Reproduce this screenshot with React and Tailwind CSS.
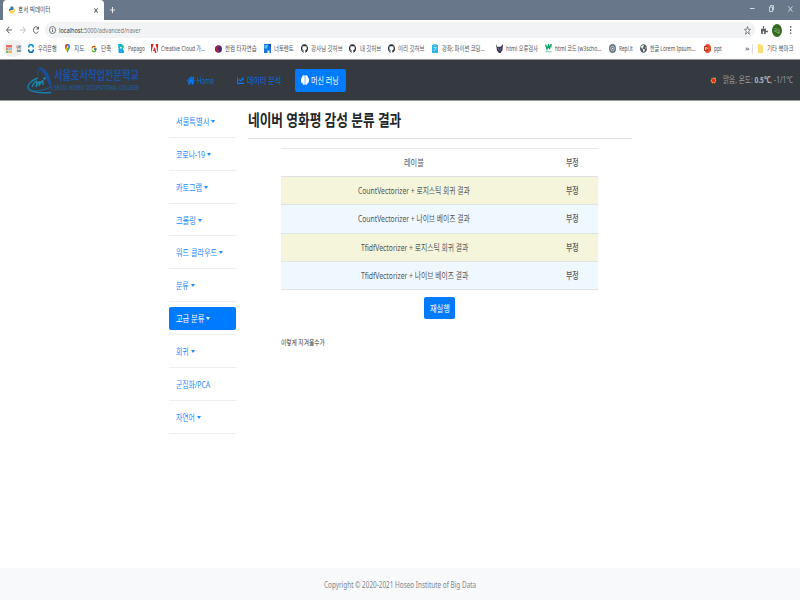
import React, { useLayoutEffect, useRef, useState } from "react";
import { FaHome, FaChartLine, FaGithub, FaPuzzlePiece, FaGlobeAmericas } from "react-icons/fa";
import { FcGoogle } from "react-icons/fc";

// Single line of text condensed or expanded to a given width.
function T({ w, className = "", children }) {
  const ref = useRef(null);
  const [k, setK] = useState(1);
  useLayoutEffect(() => {
    const fit = () => {
      if (ref.current && ref.current.offsetWidth) setK(w / ref.current.offsetWidth);
    };
    fit();
    document.fonts?.ready.then(fit);
  }, [w]);
  return (
    <span className={"block shrink-0 whitespace-nowrap " + className} style={{ width: w }}>
      <span ref={ref} className="inline-block origin-left" style={{ transform: `scaleX(${k})` }}>
        {children}
      </span>
    </span>
  );
}

function Svg({ className = "w-[7px] h-[9px]", box = "0 0 14 18", children }) {
  return (
    <svg viewBox={box} preserveAspectRatio="none" className={"block shrink-0 " + className} fill="none">
      {children}
    </svg>
  );
}

const Github = () => <FaGithub preserveAspectRatio="none" className="block w-[7px] h-[9px] shrink-0 text-[#24292e]" />;

const icons = {
  apps: (
    <Svg className="w-[6px] h-[8px]" box="0 0 6 8">
      <path d="M0 0h6v2.500H0z" fill="#ee6b5f" />
      <path d="M0 3h2v2H0z" fill="#ee8f58" /><path d="M2.300 3h3.700v2H2.300z" fill="#9cbfec" />
      <path d="M0 5.500h2.500v2.500H0z" fill="#7bbd72" /><path d="M2.500 5.500h3.500v2.500H2.500z" fill="#f3b54a" />
    </Svg>
  ),
  woori: (
    <Svg className="w-[6px] h-[9px]" box="0 0 12 18">
      <path d="M1 7C2-.5 10-.5 11 7" stroke="#1198d6" strokeWidth="3.500" />
      <path d="M1 11c1 7.500 9 7.500 10 0" stroke="#0873b9" strokeWidth="3.500" />
    </Svg>
  ),
  map: (
    <Svg className="w-[5px] h-[9px]" box="0 0 10 18">
      <path d="M5 18C4 13 0 10 0 6a5 6 0 0 1 10 0c0 4-4 7-5 12z" fill="#34a853" />
      <path d="M0 6a5 6 0 0 1 5-6v6L1 10z" fill="#ea4335" />
      <path d="M5 0a5 6 0 0 1 5 6L5 5z" fill="#4285f4" />
      <path d="M1 10l4-4v6l-2 2z" fill="#fbbc04" /><circle cx="5" cy="6" r="1.700" fill="#fff" />
    </Svg>
  ),
  google: <FcGoogle preserveAspectRatio="none" className="block w-[6px] h-[8px] shrink-0" />,
  papago: (
    <Svg className="w-[6px] h-[9px]" box="0 0 12 18">
      <path d="M0 0h7l3 3v9l2 1v5H1V9z" fill="#19a9e8" /><path d="M6 1c4 0 6 2 6 5l-5 5z" fill="#17c98b" />
      <path d="M4 6h3v3H4z" fill="#fff" /><path d="M0 0h4v5H0z" fill="#25c3cf" />
    </Svg>
  ),
  adobe: (
    <Svg className="w-[7px] h-[9px]">
      <path d="M0 0h5L0 18zM9 0h5v18zM7 6l4 12H8l-1-4H4z" fill="#ee1c16" />
    </Svg>
  ),
  hancom: (
    <Svg className="w-[7px] h-[8px]" box="0 0 14 16">
      <ellipse cx="7" cy="8" rx="7" ry="7.500" fill="#5a2a78" />
      <path d="M1 5C4 0 10 0 11 5s-4 10-7 9S-1 9 1 5z" fill="#c01c3a" opacity=".8" />
      <path d="M7 3c5 0 6 5 4 9-3 2-6-3-4-9z" fill="#3a2a80" />
    </Svg>
  ),
  torrent: (
    <Svg className="w-[7px] h-[9px]">
      <path d="M0 0h14v18H0z" fill="#1976e0" /><path d="M1 2h7l-2 7H1z" fill="#58c6fa" />
      <path d="M9 0h5v9z" fill="#124fb4" /><path d="M7 13h4v5H7z" fill="#e2eefb" />
    </Svg>
  ),
  github: <Github />,
  course: (
    <Svg className="w-[6px] h-[9px]" box="0 0 12 18">
      <path d="M0 2h12v16H0z" fill="#2fb5ea" /><path d="M2 0h8v3H2z" fill="#70cdf1" />
      <path d="M3 7h6M9 7L4 14" stroke="#c8edfb" strokeWidth="1.500" />
    </Svg>
  ),
  validator: (
    <Svg className="w-[7px] h-[9px]">
      <path d="M0 0l3 6h1l2-1 1 1 3-1 4-5-1 12-4 6H6l-4-5z" fill="#332f4c" /><path d="M4 7l2 6M10 7l-2 6" stroke="#a79bbb" strokeWidth="1.300" />
    </Svg>
  ),
  w3: (
    <Svg className="w-[7px] h-[9px]">
      <path d="M1 1l3 9 3-8 2 8 2-8" stroke="#08a566" strokeWidth="2.600" /><path d="M10 1h4l-2 3 1 3" stroke="#08a566" strokeWidth="1.400" />
      <path d="M1 15.500h12" stroke="#73c9a4" strokeWidth="2" />
    </Svg>
  ),
  replit: (
    <Svg className="w-[7px] h-[9px]">
      <ellipse cx="7" cy="9" rx="7" ry="9" fill="#667881" /><ellipse cx="7" cy="9" rx="3.600" ry="4.800" stroke="#dfe5e8" strokeWidth="1.300" />
      <circle cx="7" cy="9" r="1.500" fill="#dfe5e8" />
    </Svg>
  ),
  globe: <FaGlobeAmericas preserveAspectRatio="none" className="block w-[7px] h-[9px] shrink-0 text-[#50565d]" />,
  ppt: (
    <Svg className="w-[7px] h-[9px]">
      <ellipse cx="7.500" cy="9" rx="6.500" ry="9" fill="#e0512c" /><path d="M0 4h8v10H0z" fill="#c5371b" />
      <path d="M3 12V7h2q2 0 2 1.500T5 10H3" stroke="#fff" strokeWidth="1.300" />
    </Svg>
  ),
};

// [icon, label, slot width, gap before label, label width]
const bookmarks = [
  ["woori", "우리은행", 37, 4, 19],
  ["map", "지도", 26, 4, 10],
  ["google", "단축", 27, 4, 10],
  ["papago", "Papago", 33, 4, 17],
  ["adobe", "Creative Cloud 가...", 64, 3, 44],
  ["hancom", "한컴 타자연습", 49, 3, 32],
  ["torrent", "너토렌트", 37, 3, 20],
  ["github", "강사님 깃허브", 48, 3, 32],
  ["github", "내 깃허브", 39, 4, 21],
  ["github", "이리 깃허브", 44, 3, 27],
  ["course", "강좌: 파이썬 코딩...", 64, 4, 43],
  ["validator", "html 오류검사", 49, 3, 32],
  ["w3", "html 코드 (w3scho...", 64, 3, 46],
  ["replit", "Repl.it", 31, 3, 14],
  ["globe", "한글 Lorem Ipsum...", 64, 3, 45],
  ["ppt", "ppt", 41, 3, 8],
];

const sidebar = [
  ["서울특별시", 33], ["코로나-19", 29], ["카토그램", 26], ["크롤링", 20], ["워드 클라우드", 41],
  ["분류", 13], ["고급 분류", 28], ["회귀", 13], ["군집화/PCA", 34], ["자연어", 19],
];

const rows = [
  ["CountVectorizer + 로지스틱 회귀 결과", 112],
  ["CountVectorizer + 나이브 베이즈 결과", 112],
  ["TfidfVectorizer + 로지스틱 회귀 결과", 107],
  ["TfidfVectorizer + 나이브 베이즈 결과", 107],
];

function Browser() {
  return (
    <header>
      <div className="flex h-5 bg-[#68778a]">
        <div className="ml-[3px] flex h-5 w-[101px] items-center rounded-t-[4px] bg-white pl-[6px]">
          <Svg className="w-[6px] h-[8px]" box="0 0 12 16">
            <path d="M3 1h4l2 2v5H4L2 11 0 9V6l3-1z" fill="#3776ab" />
            <path d="M9 15H4l-2-2V9h6l2-4 2 2v4l-3 1z" fill="#ffd343" />
          </Svg>
          <T w={32} className="ml-[3px] pb-px text-[7px] leading-[9px] text-[#444]">호서 빅데이터</T>
          <Svg className="ml-[44px] w-[4px] h-[5px]" box="0 0 4 5"><path d="M.3.3l3.400 4.400M3.700.3L.3 4.700" stroke="#333" strokeWidth=".9" /></Svg>
        </div>
        <Svg className="ml-[5px] mt-[6px] w-[7px] h-[8px]" box="0 0 7 8"><path d="M3.500 1v6M1 4h5" stroke="#e6e9ed" strokeWidth="1" /></Svg>
        <div className="ml-auto flex items-center pb-[3px] pr-[7px]">
          <Svg className="w-[5px] h-[5px]" box="0 0 5 5"><path d="M0 2.500h4.500" stroke="#e4e8ec" strokeWidth=".9" /></Svg>
          <Svg className="ml-[14px] w-[5px] h-[7px]" box="0 0 5 7"><path d="M.5 2h3v4.500h-3zM1.500 2V.6h3V5h-1" stroke="#e4e8ec" strokeWidth=".8" /></Svg>
          <Svg className="ml-[14px] w-[5px] h-[6px]" box="0 0 5 6"><path d="M.3.3l4.200 5.400M4.500.3L.3 5.700" stroke="#e4e8ec" strokeWidth=".8" /></Svg>
        </div>
      </div>
      <div className="flex h-[20px] items-center bg-white pl-[6px]">
        <Svg className="w-[6px] h-[8px]" box="0 0 6 8"><path d="M6 4H.7M3.200.7L.6 4l2.600 3.300" stroke="#4e5256" strokeWidth=".9" /></Svg>
        <Svg className="ml-[8px] w-[6px] h-[8px]" box="0 0 6 8"><path d="M0 4h5.300M2.800.7L5.400 4 2.800 7.300" stroke="#b5b7ba" strokeWidth=".9" /></Svg>
        <Svg className="ml-[7px] w-[6px] h-[8px]" box="0 0 6 8"><path d="M5.200 5.500A2.500 3.300 0 1 1 4.700 1.700L5.400 3H3.300M5.500.7V3.200" stroke="#4e5256" strokeWidth=".9" /></Svg>
        <div className="ml-[6px] flex h-[16px] w-[710px] items-center rounded-full bg-[#f1f3f4] pl-[4px]">
          <Svg className="w-[7px] h-[8px]" box="0 0 6 8"><ellipse cx="3" cy="4" rx="2.600" ry="3.500" stroke="#555" strokeWidth=".7" /><path d="M3 3.500V6M3 2v.8" stroke="#555" strokeWidth=".8" /></Svg>
          <T w={82} className="ml-[3px] text-[7.800px] leading-[10px] text-[#777b80]"><span className="text-[#303336]">localhost</span>:5000/advanced/naver</T>
          <Svg className="ml-auto mr-[4px] w-[7px] h-[9px]"><path d="M7 1l1.700 5.500H13L9.500 10.500l1.300 6L7 13l-3.800 3.500 1.300-6L1 6.500h4.300z" stroke="#606468" strokeWidth="1.500" /></Svg>
        </div>
        <FaPuzzlePiece preserveAspectRatio="none" className="ml-[6px] block h-[8px] w-[7px] text-[#5f6368]" />
        <div className="ml-[4px] flex h-[13px] w-[10px] items-center justify-center rounded-[50%] bg-[#33691e]"><T w={6} className="text-[5px] leading-[7px] text-[#c5d5bd]">하늘</T></div>
        <Svg className="ml-[7px] w-[3px] h-[8px]" box="0 0 3 8"><path d="M1 0h1.300v1.700H1zM1 3.200h1.300v1.700H1zM1 6.400h1.300V8H1z" fill="#606468" /></Svg>
      </div>
      <div className="flex h-[19px] items-center bg-white pb-[2px] pl-[3px] text-[6.700px] leading-[9px] text-[#4d5156]">
        <div className="mr-[5px] flex h-[17px] w-[20px] items-center rounded-full bg-[#f1f1f1] pl-[3px]">
          {icons.apps}<T w={5} className="ml-[4px]">앱</T>
        </div>
        {bookmarks.map(([icon, label, slot, gap, w], i) => (
          <div key={i} className="flex shrink-0 items-center" style={{ width: slot, columnGap: gap }}>
            {icons[icon]}<T w={w}>{label}</T>
          </div>
        ))}
        <T w={4}>»</T>
        <div className="ml-[3px] h-[10px] w-px bg-[#ddd]" />
        <Svg className="ml-[5px] w-[5px] h-[9px]" box="0 0 5 9"><path d="M0 0h2.500l.5 1h2v8H0z" fill="#fbdc75" /></Svg>
        <T w={27} className="ml-[4px]">기타 북마크</T>
      </div>
    </header>
  );
}

function Navbar() {
  return (
    <nav className="flex h-[42px] items-center border-b border-t border-b-[#92959b] border-t-[#8e8f90] bg-[#343a40] pl-[27px] text-[9.300px] leading-[12px] text-[#0a6ade]">
      <Svg className="w-[26px] h-[27px]" box="0 0 26 27">
        <path d="M10.500 8C10 4 12 1 14 1" stroke="#194f98" strokeWidth="1.200" />
        <path d="M12 1C19-1 25 11 25.500 26 22 17 19 8 12 1z" fill="#194f98" />
        <path d="M11 11C3 14-1 19 2 22.500c4 3 14 3.500 22 3" stroke="#1a7fb0" strokeWidth="1.400" />
        <path d="M2 22.500c5 3 14 1 21-2" stroke="#1a6aa8" strokeWidth=".9" />
        <path d="M5 20c2-5 5-7 5-5l-1 5c2-5 4-6 4-5l-1 4c2-5 4-6 4-5v4" stroke="#188bb5" strokeWidth="1.300" />
        <circle cx="17.500" cy="11.500" r="1.200" fill="#188bb5" />
      </Svg>
      <div className="ml-[1px] w-[85px]">
        <T w={85} className="text-[12.500px] font-bold leading-[16px] text-[#1b52a0]">서울호서직업전문학교</T>
        <T w={85} className="font-['Liberation_Sans'] text-[7px] font-bold leading-[8px] text-[#24558e]">SEOUL HOSEO OCCUPATIONAL COLLEGE</T>
      </div>
      <FaHome preserveAspectRatio="none" className="ml-[48px] block h-[9px] w-[8px] text-[#007bff]" />
      <T w={17} className="ml-[2px] pt-px">Home</T>
      <FaChartLine preserveAspectRatio="none" className="ml-[23px] block h-[9px] w-[7px] text-[#007bff]" />
      <T w={34} className="ml-[3px] pt-px">데이터 분석</T>
      <div className="ml-[14px] flex h-[23px] w-[51px] items-center rounded-[2px] bg-[#007bff] pl-[6px] text-white">
        <Svg className="h-[10px] w-[8px]" box="0 0 16 20">
          <path d="M7.500 1C4-1 2 3 2 5-1 7 0 10 0 12c0 3 2 4 3 5 1 3 3 3 4.500 2zM8.500 1C12-1 14 3 14 5c3 2 2 5 2 7 0 3-2 4-3 5-1 3-3 3-4.500 2z" fill="#fff" />
        </Svg>
        <T w={28} className="ml-[2px] pt-[2px]">머신 러닝</T>
      </div>
      <Svg className="ml-auto w-[7px] h-[9px]">
        <path d="M7 2l2 2 3-1-1 4 2 2-2 3-1 3-3-1-3 1-1-3-2-3 2-2V4l3 1z" fill="#e9a13c" /><ellipse cx="7" cy="9" rx="3.200" ry="4" fill="#f32619" />
      </Svg>
      <T w={70} className="ml-[6px] mr-[7px] text-[#9a9da0]">맑음, 온도: <b className="text-[#b2b4b6]">0.5℃</b>, -1/1℃</T>
    </nav>
  );
}

export default function App() {
  return (
    <div className="flex h-[600px] w-[800px] flex-col overflow-hidden bg-white font-['Noto_Sans','Noto_Sans_CJK_KR',sans-serif] text-[9px] leading-[12px] text-[#212529]">
      <Browser />
      <Navbar />
      <main className="flex min-h-0 flex-1 pl-[169px]">
        <aside className="w-[67px] pt-[4px]">
          {sidebar.map(([label, w]) => (
            <div key={label} className="flex h-[32.870px] items-center border-b border-[#eeeff0]">
              <div className={"flex h-[23px] w-full items-center rounded-[2px] pl-[6.500px] " + (label === "고급 분류" ? "bg-[#007bff] text-white" : "text-[#2389ff]")}>
                <T w={w} className="pt-[2px]">{label}</T>
                {label !== "군집화/PCA" && <Svg className="ml-[2px] mt-px w-[4px] h-[3px]" box="0 0 4 3"><path d="M0 0h4L2 3z" fill="currentColor" /></Svg>}
              </div>
            </div>
          ))}
        </aside>
        <section className="ml-[12px] w-[384px]">
          <h3 className="flex h-[38px] items-center border-b border-[#dfdfdf] text-[16px] font-semibold leading-[20px]">
            <T w={153} className="pt-px">네이버 영화평 감성 분류 결과</T>
          </h3>
          <div className="ml-[33px] mt-[9px] w-[317px]">
            <div className="flex h-[29px] items-center border-b border-t border-b-[#dee2e6] border-t-[#e6e8ea] text-[#50555a]">
              <div className="flex w-[266px] justify-center"><T w={20}>레이블</T></div>
              <div className="flex flex-1 justify-center"><T w={13} className="font-medium">부정</T></div>
            </div>
            {rows.map(([label, w], i) => (
              <div key={label} className={"flex h-[28.300px] items-center border-b border-[#dfe4e8] pt-px text-[#50555a] " + (i % 2 ? "bg-[#f0f8ff]" : "bg-[#f5f5dc]")}>
                <div className="flex w-[266px] justify-center"><T w={w}>{label}</T></div>
                <div className="flex flex-1 justify-center"><T w={13} className="font-medium">부정</T></div>
              </div>
            ))}
            <div className="mt-[7px] flex justify-center">
              <button className="flex h-[22px] w-[31px] items-center justify-center rounded-[2px] bg-[#007bff] text-white"><T w={20} className="pt-px text-left">재실행</T></button>
            </div>
            <T w={44} className="mt-[18px] text-[7.200px] leading-[10px] text-[#333]">이렇게 지겨울수가</T>
          </div>
        </section>
      </main>
      <footer className="flex h-[32px] shrink-0 items-center justify-center bg-[#f8f9fa] pt-[2px] text-[#7f868c]">
        <T w={152}>Copyright © 2020-2021 Hoseo Institute of Big Data</T>
      </footer>
    </div>
  );
}
